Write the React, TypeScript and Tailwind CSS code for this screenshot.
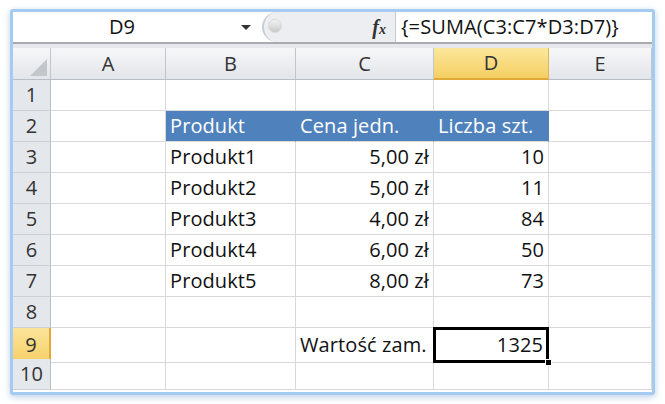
import React from 'react';

const cols = ['A', 'B', 'C', 'D', 'E'];

const data: Record<number, [string, string, string, string, string]> = {
  2: ['', 'Produkt', 'Cena jedn.', 'Liczba szt.', ''],
  3: ['', 'Produkt1', '5,00 zł', '10', ''],
  4: ['', 'Produkt2', '5,00 zł', '11', ''],
  5: ['', 'Produkt3', '4,00 zł', '84', ''],
  6: ['', 'Produkt4', '6,00 zł', '50', ''],
  7: ['', 'Produkt5', '8,00 zł', '73', ''],
  9: ['', '', 'Wartość zam.', '1325', ''],
};

const gridCols = 'grid grid-cols-[38px_115px_130px_138px_115px_1fr]';

const App: React.FC = () => {
  return (
    <div className="w-[665px] h-[404px] bg-white pt-[9px] pl-[10px] font-['Open_Sans','Lato',sans-serif] text-[20px] tracking-[0.1px] text-[#111]">
      <div className="w-[645px] h-[386px] border-[3px] border-[#a6cbf3] rounded-[3px] shadow-[0_2px_6px_rgba(120,160,210,0.5)] bg-white overflow-hidden flex flex-col">
        {/* formula bar */}
        <div className="h-[30px] flex items-stretch">
          <div className="w-[249px] relative flex items-center bg-white">
            <span className="ml-[96px]">D9</span>
            <span className="absolute left-[228px] top-[13px] w-0 h-0 border-l-[5px] border-r-[5px] border-t-[5px] border-l-transparent border-r-transparent border-t-[#333]" />
          </div>
          <div className="flex-1 flex items-center bg-[#eceef1] rounded-l-[16px] border-l-2 border-[#c9ccd1] relative">
            <span className="absolute left-[4px] top-[7px] w-[14px] h-[14px] rounded-full bg-gradient-to-b from-[#f4f4f4] to-[#c8c8c8] border border-[#d8d8d8]" />
            <span className="ml-auto mr-[9px] font-['Liberation_Serif',serif] italic font-bold text-[20px] text-[#333]">
              f<span className="text-[14px]">x</span>
            </span>
          </div>
          <div className="w-[257px] border-l border-[#c6c9cf] bg-white flex items-center pl-[5px]">
            {'{=SUMA(C3:C7*D3:D7)}'}
          </div>
        </div>
        <div className="h-[6px] border-t-2 border-[#a8abb0] bg-[#e6e8eb]" />

        {/* column headers */}
        <div className={`${gridCols} h-[32px] bg-gradient-to-b from-[#f6f7f9] to-[#e2e5e9] border-b border-[#b9bec6]`}>
          <div className="border-r border-[#c2c6cc] relative">
            <svg className="absolute right-[3px] bottom-[3px]" width="17" height="17" viewBox="0 0 17 17">
              <polygon points="17,0 17,17 0,17" fill="#c3c7cc" />
            </svg>
          </div>
          {cols.map(c => (
            <div
              key={c}
              className={
                c === 'D'
                  ? 'flex items-center justify-center border-r border-[#e0b450] bg-gradient-to-b from-[#fbe79b] to-[#f5cf62] border-b-2 border-b-[#e2a838] -mb-px text-[#333]'
                  : 'flex items-center justify-center border-r border-[#c2c6cc] text-[#333]'
              }
            >
              {c}
            </div>
          ))}
        </div>

        {/* rows */}
        {Array.from({ length: 10 }, (_, i) => i + 1).map(r => {
          const row = data[r] || ['', '', '', '', ''];
          return (
            <div key={r} className={`${gridCols} h-[31px]`}>
              <div
                className={
                  r === 9
                    ? 'flex items-center justify-center bg-gradient-to-b from-[#fbe49a] to-[#f6d066] border-r-2 border-[#e2a838] border-b border-b-[#d9b560] text-[#333]'
                    : 'flex items-center justify-center bg-[#e4e7eb] border-r border-[#b9bec6] border-b border-b-[#cdd1d6] text-[#333]'
                }
              >
                {r}
              </div>
              {row.map((v, ci) => {
                const isHead = r === 2 && ci >= 1 && ci <= 3;
                const isSel = r === 9 && ci === 3;
                const right = (ci === 2 || ci === 3) && r !== 2 && !(r === 9 && ci === 2);
                let cls = 'flex items-center border-r border-b border-[#d9d9d9] px-[4px] whitespace-nowrap';
                if (isHead) cls += ' bg-[#4f81bd] text-white border-r-[#4f81bd] border-b-[#d9d9d9]';
                if (right) cls += ' justify-end';
                if (isSel) cls = 'relative flex items-center justify-end px-[3px] border-[3px] border-black -mt-px -ml-px';
                return (
                  <div key={ci} className={cls}>
                    {v}
                    {isSel && (
                      <span className="absolute right-[-6px] bottom-[-6px] w-[7px] h-[7px] bg-black border border-white" />
                    )}
                  </div>
                );
              })}
            </div>
          );
        })}
      </div>
    </div>
  );
};

export default App;
